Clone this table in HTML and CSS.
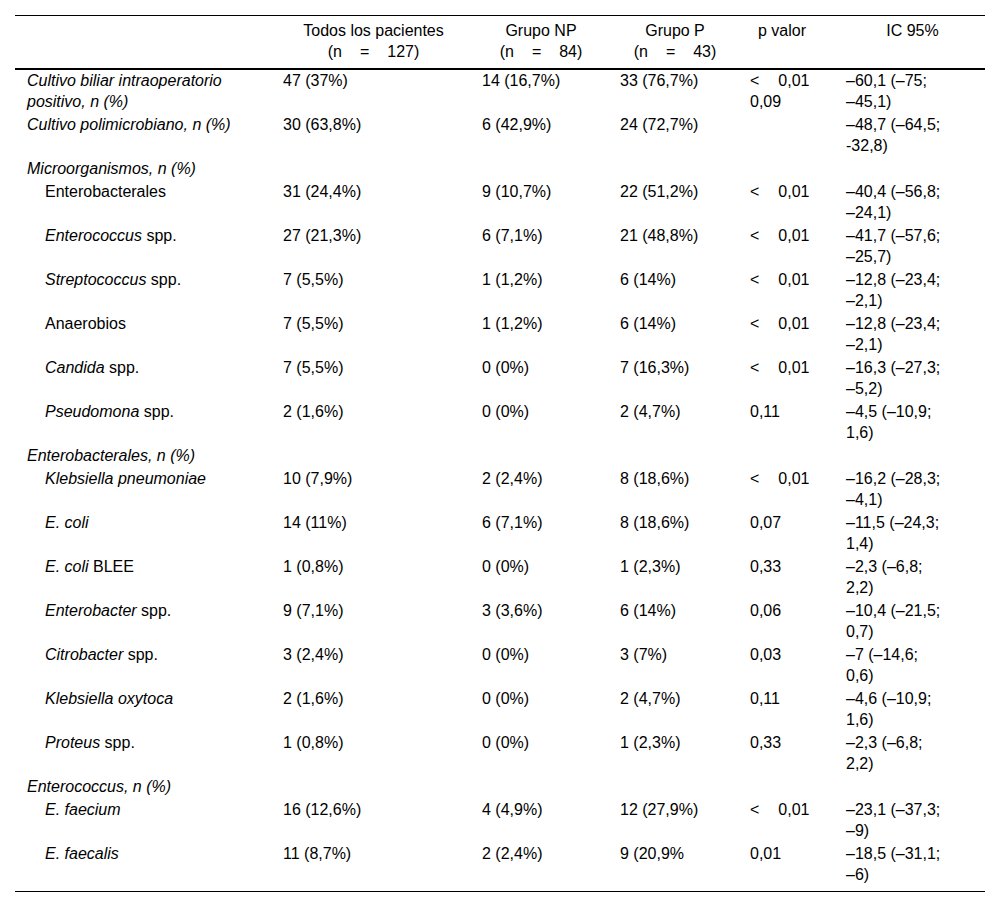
FILE: index.html
```html
<!DOCTYPE html>
<html lang="es">
<head>
<meta charset="utf-8">
<title>Tabla</title>
<link rel="stylesheet" href="styles.css">
</head>
<body>
<div class="wrap">
<table class="tbl">
  <colgroup>
    <col class="c1"><col class="c2"><col class="c3"><col class="c4"><col class="c5"><col class="c6">
  </colgroup>
  <thead>
    <tr>
      <th class="lab"></th>
      <th class="h2">Todos los pacientes<br>(n<span class="eq">=</span>127)</th>
      <th class="h3">Grupo NP<br>(n<span class="eq">=</span>84)</th>
      <th class="h4">Grupo P<br>(n<span class="eq">=</span>43)</th>
      <th class="h5">p valor</th>
      <th class="h6">IC 95%</th>
    </tr>
  </thead>
  <tbody>
    <tr><td class="lab"><i>Cultivo biliar intraoperatorio<br>positivo, n (%)</i></td><td>47 (37%)</td><td>14 (16,7%)</td><td>33 (76,7%)</td><td>&lt;<span class="lt">0,01</span><br>0,09</td><td>–60,1 (–75;<br>–45,1)</td></tr>
    <tr><td class="lab"><i>Cultivo polimicrobiano, n (%)</i></td><td>30 (63,8%)</td><td>6 (42,9%)</td><td>24 (72,7%)</td><td></td><td>–48,7 (–64,5;<br>-32,8)</td></tr>
    <tr><td class="lab"><i>Microorganismos, n (%)</i></td><td></td><td></td><td></td><td></td><td></td></tr>
    <tr><td class="sub">Enterobacterales</td><td>31 (24,4%)</td><td>9 (10,7%)</td><td>22 (51,2%)</td><td>&lt;<span class="lt">0,01</span></td><td>–40,4 (–56,8;<br>–24,1)</td></tr>
    <tr><td class="sub"><i>Enterococcus</i> spp.</td><td>27 (21,3%)</td><td>6 (7,1%)</td><td>21 (48,8%)</td><td>&lt;<span class="lt">0,01</span></td><td>–41,7 (–57,6;<br>–25,7)</td></tr>
    <tr><td class="sub"><i>Streptococcus</i> spp.</td><td>7 (5,5%)</td><td>1 (1,2%)</td><td>6 (14%)</td><td>&lt;<span class="lt">0,01</span></td><td>–12,8 (–23,4;<br>–2,1)</td></tr>
    <tr><td class="sub">Anaerobios</td><td>7 (5,5%)</td><td>1 (1,2%)</td><td>6 (14%)</td><td>&lt;<span class="lt">0,01</span></td><td>–12,8 (–23,4;<br>–2,1)</td></tr>
    <tr><td class="sub"><i>Candida</i> spp.</td><td>7 (5,5%)</td><td>0 (0%)</td><td>7 (16,3%)</td><td>&lt;<span class="lt">0,01</span></td><td>–16,3 (–27,3;<br>–5,2)</td></tr>
    <tr><td class="sub"><i>Pseudomona</i> spp.</td><td>2 (1,6%)</td><td>0 (0%)</td><td>2 (4,7%)</td><td>0,11</td><td>–4,5 (–10,9;<br>1,6)</td></tr>
    <tr><td class="lab"><i>Enterobacterales, n (%)</i></td><td></td><td></td><td></td><td></td><td></td></tr>
    <tr><td class="sub"><i>Klebsiella pneumoniae</i></td><td>10 (7,9%)</td><td>2 (2,4%)</td><td>8 (18,6%)</td><td>&lt;<span class="lt">0,01</span></td><td>–16,2 (–28,3;<br>–4,1)</td></tr>
    <tr><td class="sub"><i>E. coli</i></td><td>14 (11%)</td><td>6 (7,1%)</td><td>8 (18,6%)</td><td>0,07</td><td>–11,5 (–24,3;<br>1,4)</td></tr>
    <tr><td class="sub"><i>E. coli</i> BLEE</td><td>1 (0,8%)</td><td>0 (0%)</td><td>1 (2,3%)</td><td>0,33</td><td>–2,3 (–6,8;<br>2,2)</td></tr>
    <tr><td class="sub"><i>Enterobacter</i> spp.</td><td>9 (7,1%)</td><td>3 (3,6%)</td><td>6 (14%)</td><td>0,06</td><td>–10,4 (–21,5;<br>0,7)</td></tr>
    <tr><td class="sub"><i>Citrobacter</i> spp.</td><td>3 (2,4%)</td><td>0 (0%)</td><td>3 (7%)</td><td>0,03</td><td>–7 (–14,6;<br>0,6)</td></tr>
    <tr><td class="sub"><i>Klebsiella oxytoca</i></td><td>2 (1,6%)</td><td>0 (0%)</td><td>2 (4,7%)</td><td>0,11</td><td>–4,6 (–10,9;<br>1,6)</td></tr>
    <tr><td class="sub"><i>Proteus</i> spp.</td><td>1 (0,8%)</td><td>0 (0%)</td><td>1 (2,3%)</td><td>0,33</td><td>–2,3 (–6,8;<br>2,2)</td></tr>
    <tr><td class="lab"><i>Enterococcus, n (%)</i></td><td></td><td></td><td></td><td></td><td></td></tr>
    <tr><td class="sub"><i>E. faecium</i></td><td>16 (12,6%)</td><td>4 (4,9%)</td><td>12 (27,9%)</td><td>&lt;<span class="lt">0,01</span></td><td>–23,1 (–37,3;<br>–9)</td></tr>
    <tr class="last"><td class="sub"><i>E. faecalis</i></td><td>11 (8,7%)</td><td>2 (2,4%)</td><td>9 (20,9%</td><td>0,01</td><td>–18,5 (–31,1;<br>–6)</td></tr>
  </tbody>
</table>
</div>
</body>
</html>
```

FILE: styles.css
```css
html, body {
  margin: 0;
  padding: 0;
  background: #ffffff;
}

.wrap {
  padding: 15px 15px 0 15px;
}

.tbl {
  width: 970px;
  table-layout: fixed;
  border-collapse: separate;
  border-spacing: 0;
  font-family: "Liberation Sans", Arial, sans-serif;
  font-size: 16px;
  line-height: 21px;
  color: #000000;
}

.c1 { width: 260px; }
.c2 { width: 199px; }
.c3 { width: 138px; }
.c4 { width: 130px; }
.c5 { width: 96px; }
.c6 { width: 147px; }

.tbl th {
  font-weight: normal;
  text-align: center;
  vertical-align: top;
  padding: 4px 12px 6px 8px;
  border-top: 1px solid #000000;
  border-bottom: 2px solid #000000;
  white-space: nowrap;
}

.tbl th.h2 { padding-right: 10px; }
.tbl th.h5 { padding-right: 24px; }
.tbl th.h6 { padding-right: 6px; }

.tbl td {
  text-align: left;
  vertical-align: top;
  padding: 0 8px 2px 8px;
  white-space: nowrap;
}

.tbl td.lab {
  padding-left: 12px;
}

.tbl td.sub {
  padding-left: 30px;
}

.tbl tr.last td {
  padding-bottom: 6px;
  border-bottom: 1px solid #000000;
}

.eq {
  margin: 0 18px;
}

.lt {
  margin-left: 19px;
}
```
